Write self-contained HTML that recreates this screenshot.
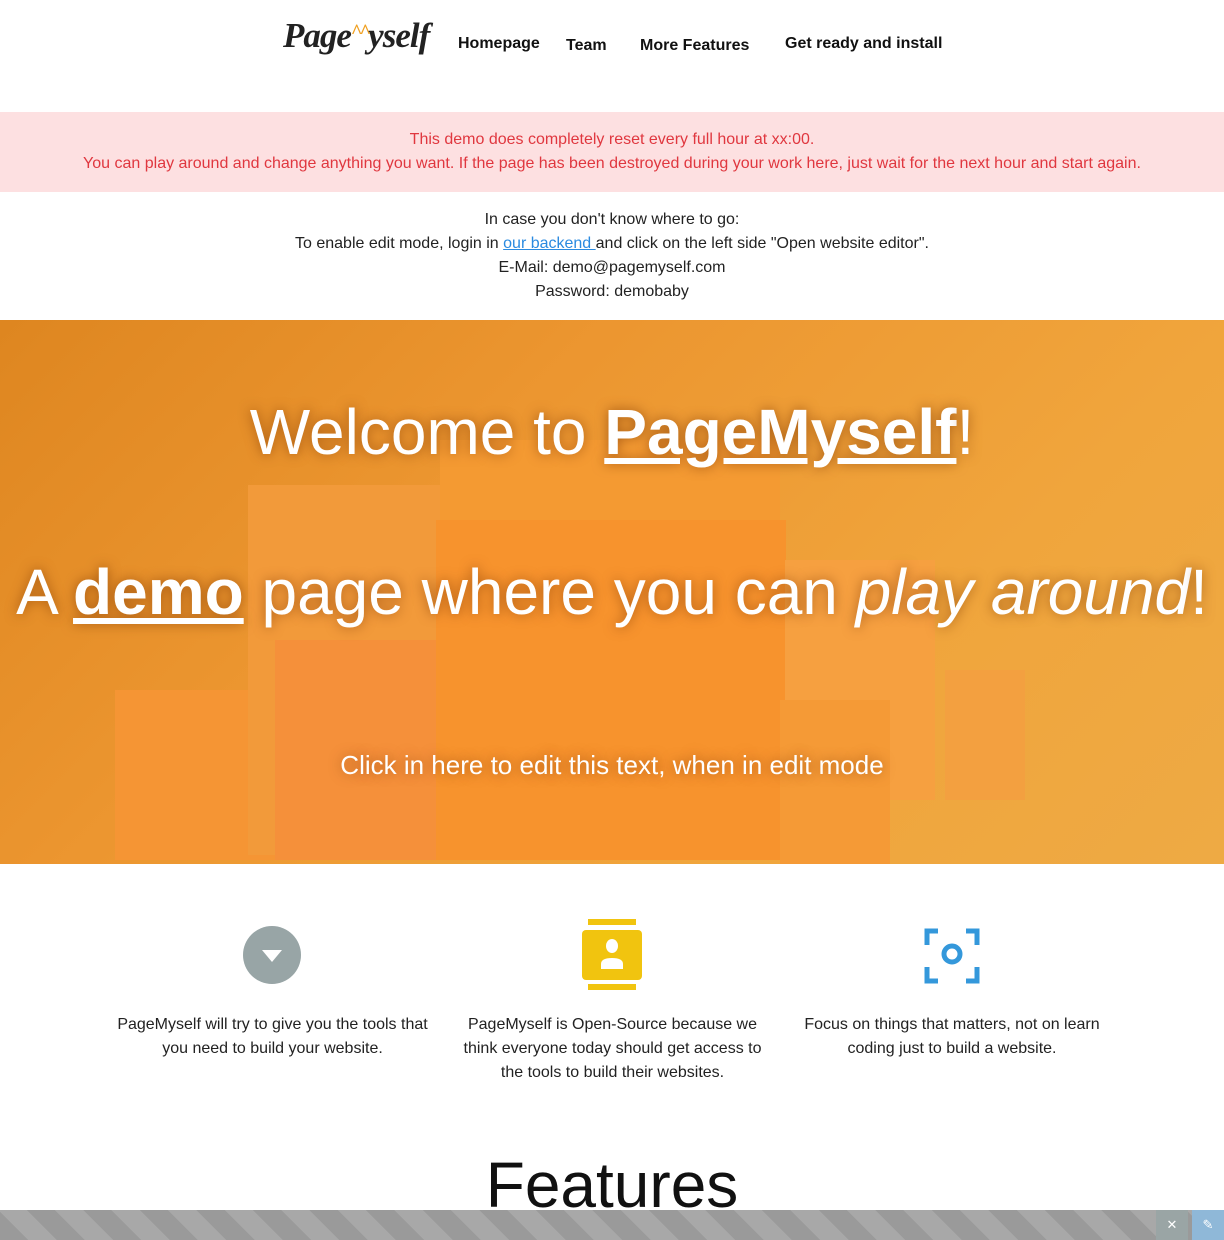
<!DOCTYPE html>
<html><head><meta charset="utf-8"><style>
*{margin:0;padding:0;box-sizing:border-box}
body{width:1224px;height:1240px;overflow:hidden;font-family:"Liberation Sans",sans-serif;background:#fff;position:relative}
.nav{height:112px;position:relative}
.logo{position:absolute;left:283px;top:16px;font-family:"Liberation Serif",serif;font-style:italic;font-weight:bold;font-size:35px;color:#222;letter-spacing:-1px;white-space:nowrap}
.logo span{color:#f0a020;font-style:normal;font-size:20px;vertical-align:9px;letter-spacing:-3px}
.nav a{position:absolute;font-weight:bold;font-size:16px;color:#111;text-decoration:none}
.alert{background:#fde0e1;color:#e0373f;text-align:center;font-size:16px;line-height:24px;height:80px;padding-top:16px}
.info{text-align:center;font-size:16px;line-height:24px;color:#222;height:128px;padding-top:16px}
.info a{color:#2a8ae0}
.hero{position:relative;height:544px;overflow:hidden;background:linear-gradient(135deg,#de8620 0%,#ec9630 35%,#f0a53c 70%,#eeaa44 100%);color:#fff;text-align:center;text-shadow:0 0 12px rgba(120,50,0,.6)}
.b{position:absolute}
.hero h1{position:absolute;width:100%;font-weight:normal}
.feat{position:absolute;top:1013px;text-align:center;font-size:16px;line-height:24px;color:#222}
.bar{position:absolute;left:0;top:1210px;width:1224px;height:30px;background:repeating-linear-gradient(45deg,#9a9a9a 0 20px,#a8a8a8 20px 40px)}
</style></head><body>
<div class="nav">
<div class="logo">Page<span>^^</span>yself</div>
<a style="left:458px;top:35px">Homepage</a>
<a style="left:566px;top:37px">Team</a>
<a style="left:640px;top:37px">More Features</a>
<a style="left:785px;top:35px">Get ready and install</a>
</div>
<div class="alert">This demo does completely reset every full hour at xx:00.<br>You can play around and change anything you want. If the page has been destroyed during your work here, just wait for the next hour and start again.</div>
<div class="info">In case you don't know where to go:<br>To enable edit mode, login in <a href="#">our backend </a>and click on the left side "Open website editor".<br>E-Mail: demo@pagemyself.com<br>Password: demobaby</div>
<div class="hero">
<div class="b" style="left:115px;top:370px;width:160px;height:170px;background:#f59534"></div>
<div class="b" style="left:248px;top:165px;width:200px;height:370px;background:#f29a3a"></div>
<div class="b" style="left:275px;top:320px;width:170px;height:220px;background:#f5903a"></div>
<div class="b" style="left:440px;top:120px;width:340px;height:420px;background:#f49a32"></div>
<div class="b" style="left:436px;top:200px;width:350px;height:340px;background:#f7932d"></div>
<div class="b" style="left:785px;top:240px;width:150px;height:240px;background:#f6a040"></div>
<div class="b" style="left:780px;top:380px;width:110px;height:164px;background:#f59a36"></div>
<div class="b" style="left:945px;top:350px;width:80px;height:130px;background:#f3a040"></div>
<h1 style="top:75px;font-size:64px">Welcome to <b><u>PageMyself</u></b>!</h1>
<h1 style="top:235px;font-size:64px">A <b><u>demo</u></b> page where you can <i>play around</i>!</h1>
<h1 style="top:430px;font-size:26px">Click in here to edit this text, when in edit mode</h1>
</div>
<svg style="position:absolute;left:242px;top:925px" width="60" height="60"><circle cx="30" cy="30" r="29" fill="#98a5a6"/><path d="M20 25h20l-10 12z" fill="#fff"/></svg>
<svg style="position:absolute;left:582px;top:919px" width="60" height="72"><rect x="6" y="0" width="48" height="6" fill="#f1c40f"/><rect x="6" y="65" width="48" height="6" fill="#f1c40f"/><rect x="0" y="11" width="60" height="50" rx="4" fill="#f1c40f"/><ellipse cx="30" cy="27" rx="6" ry="7" fill="#fff"/><path d="M19 50v-5q0-6 11-6t11 6v5z" fill="#fff"/></svg>
<svg style="position:absolute;left:924px;top:928px" width="56" height="56" fill="none" stroke="#3498db" stroke-width="5"><path d="M14 3H3v14M42 3h11v14M14 53H3V39M42 53h11V39"/><circle cx="28" cy="26" r="8"/></svg>
<div class="feat" style="left:110px;width:325px">PageMyself will try to give you the tools that you need to build your website.</div>
<div class="feat" style="left:455px;width:315px">PageMyself is Open-Source because we think everyone today should get access to the tools to build their websites.</div>
<div class="feat" style="left:797px;width:310px">Focus on things that matters, not on learn coding just to build a website.</div>
<div style="position:absolute;top:1148px;width:100%;text-align:center;font-size:64px;color:#111">Features</div>
<div class="bar"></div>
<div style="position:absolute;left:1156px;top:1210px;width:32px;height:30px;background:#9aa5a5;color:#fff;text-align:center;line-height:30px;font-size:13px">✕</div>
<div style="position:absolute;left:1192px;top:1210px;width:32px;height:30px;background:#8fb8d8;color:#fff;text-align:center;line-height:30px;font-size:13px">✎</div>
</body></html>
